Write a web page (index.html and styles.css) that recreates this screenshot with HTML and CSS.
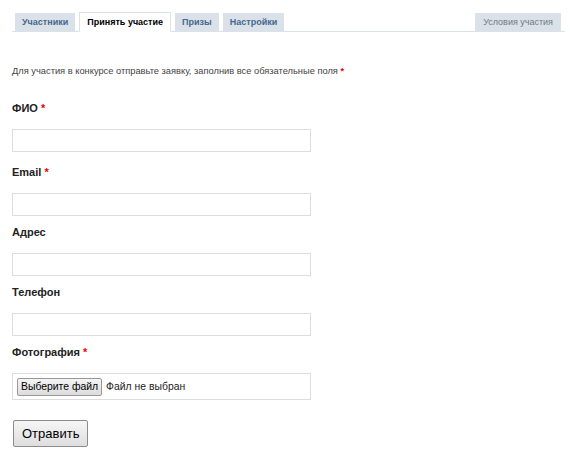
FILE: index.html
```html
<!DOCTYPE html>
<html>
<head>
    <title>Конкурс</title>
    <link rel="stylesheet" href="styles.css">
</head>
<body>
    <div class="tabs">
        <a class="tab">Участники</a>
        <a class="tab active">Принять участие</a>
        <a class="tab">Призы</a>
        <a class="tab">Настройки</a>
        <a class="tab right">Условия участия</a>
    </div>

    <form class="entry-form">
        <p class="intro">Для участия в конкурсе отправьте заявку, заполнив все обязательные поля <span class="req">*</span></p>

        <div class="field first">
            <label>ФИО <span class="req">*</span></label>
            <input type="text">
        </div>
        <div class="field">
            <label>Email <span class="req">*</span></label>
            <input type="text">
        </div>
        <div class="field">
            <label>Адрес</label>
            <input type="text">
        </div>
        <div class="field">
            <label>Телефон</label>
            <input type="text">
        </div>
        <div class="field">
            <label>Фотография <span class="req">*</span></label>
            <div class="file-box">
                <span class="file-btn">Выберите файл</span>
                <span class="file-name">Файл не выбран</span>
            </div>
        </div>

        <button type="button" class="submit">Отравить</button>
    </form>
</body>
</html>
```

FILE: styles.css
```css
body {
    margin: 0;
    padding: 12px 5px 0 12px;
    font-family: Tahoma, "Liberation Sans", Arial, sans-serif;
    font-size: 11px;
    color: #000;
    background: #fff;
}

.tabs {
    display: flex;
    align-items: flex-end;
    gap: 4px;
    padding-left: 3px;
    border-bottom: 1px solid #dae1e8;
    height: 19px;
}

.tab {
    display: block;
    height: 18px;
    line-height: 18px;
    padding: 0 7px;
    background-color: #dae1e8;
    color: #45688e;
    font-size: 9px;
    font-weight: bold;
    cursor: pointer;
}

.tab.active {
    background-color: #fff;
    color: #000;
    border: 1px solid #dae1e8;
    border-bottom: 1px solid #fff;
    height: 18px;
    margin-bottom: -1px;
}

.tab.right {
    margin-left: auto;
    margin-right: 4px;
    padding: 0 8px;
    font-weight: normal;
    color: #6b7a8c;
}

.entry-form {
    padding-top: 32px;
}

.intro {
    margin: 0 0 23px 0;
    color: #444;
    font-size: 9.3px;
    line-height: 14px;
}

.req {
    color: #e00;
    font-weight: bold;
}

.field label {
    display: block;
    font-weight: bold;
    color: #222;
    line-height: 14px;
    margin-bottom: 14px;
}

.field {
    margin-bottom: 9px;
}

.field.first {
    margin-bottom: 13px;
}

.field input {
    display: block;
    box-sizing: border-box;
    width: 299px;
    height: 23px;
    margin: 0;
    border: 1px solid #ddd;
}

.file-box {
    box-sizing: border-box;
    width: 299px;
    height: 27px;
    border: 1px solid #ddd;
    display: flex;
    align-items: center;
    padding-left: 4px;
    font-family: "Liberation Sans", Arial, sans-serif;
    font-size: 10.4px;
}

.file-btn {
    border: 1px solid #999;
    border-radius: 2px;
    background: linear-gradient(#f4f4f4, #dcdcdc);
    padding: 1px 3px;
    line-height: 14px;
    color: #000;
}

.file-name {
    margin-left: 4px;
    color: #222;
}

.submit {
    margin-top: 11px;
    margin-left: 1px;
    font-family: "Liberation Sans", Arial, sans-serif;
    font-size: 13px;
    height: 27px;
    width: 75px;
    padding: 0 8px;
    border: 1px solid #8c8c8c;
    border-radius: 2px;
    background: linear-gradient(#f6f6f6, #dedede);
    color: #000;
}
```
